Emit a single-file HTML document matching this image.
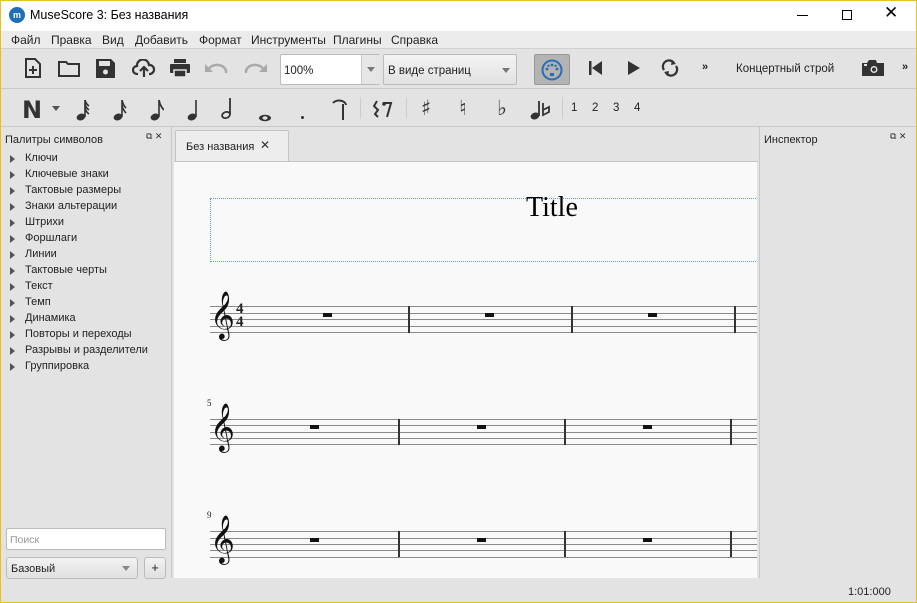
<!DOCTYPE html>
<html><head><meta charset="utf-8"><style>
*{box-sizing:border-box;margin:0;padding:0}
body{width:917px;height:603px;overflow:hidden;background:#e3e3e3;font-family:"Liberation Sans","DejaVu Sans",sans-serif;font-size:11px;color:#222;position:relative}
.abs{position:absolute}
#frame{position:absolute;left:0;top:0;width:917px;height:603px;border:1px solid #e6c01c;pointer-events:none;z-index:10}
#title{left:0;top:0;width:917px;height:31px;background:#fff}
#menu{left:0;top:31px;width:917px;height:17px;background:#ebebeb;font-size:12px}
#menu span{position:absolute;top:2px}
.tb{left:0;width:917px;background:#e3e3e3;border-bottom:1px solid #c8c8c8}
.pal{position:absolute;left:10px;font-size:11px}
.pal:before{content:"";position:absolute;left:0;top:3px;border-left:5px solid #555;border-top:4px solid transparent;border-bottom:4px solid transparent}
.pal span{margin-left:15px}
.sl{position:absolute;height:1px;background:#8a8a8a}
.bl{position:absolute;width:1.5px;background:#333}
.rest{position:absolute;width:9px;height:4px;background:#111}
.clef{position:absolute;font-family:"DejaVu Sans",serif;font-size:42px;line-height:1;color:#111}
.num{position:absolute;font-family:"Liberation Serif",serif;font-size:9px}
</style></head><body>
<div id="frame"></div>
<div class="abs" id="title">
 <div class="abs" style="left:9px;top:7px;width:16px;height:16px;border-radius:50%;background:#1e6fb8;color:#fff;font-size:9px;text-align:center;line-height:16px;font-weight:bold">m</div>
 <div class="abs" style="left:30px;top:8px;font-size:12.5px;color:#000">MuseScore 3: Без названия</div>
 <div class="abs" style="left:797px;top:15px;width:11px;height:1px;background:#000"></div>
 <div class="abs" style="left:842px;top:10px;width:10px;height:10px;border:1px solid #000"></div>
 <div class="abs" style="left:884px;top:3px;font-size:17px;color:#000">✕</div>
</div>
<div class="abs" id="menu">
 <span style="left:11px">Файл</span><span style="left:51px">Правка</span><span style="left:102px">Вид</span><span style="left:135px">Добавить</span><span style="left:199px">Формат</span><span style="left:251px">Инструменты</span><span style="left:333px">Плагины</span><span style="left:391px">Справка</span>
</div>
<div class="abs tb" style="top:48px;height:41px;border-top:1px solid #d0d0d0">
 <svg class="abs" style="left:24px;top:9px" width="17" height="21" viewBox="0 0 17 21"><path d="M2 1h9l5 5v13H2z" fill="none" stroke="#333" stroke-width="2"/><path d="M9 8v8M5 12h8" stroke="#333" stroke-width="2"/></svg>
 <svg class="abs" style="left:58px;top:11px" width="22" height="17"><path d="M1 2h7l2 2h11v12H1z" fill="none" stroke="#333" stroke-width="2"/></svg>
 <svg class="abs" style="left:96px;top:10px" width="19" height="19"><path d="M0 0h15l4 4v15H0z" fill="#333"/><rect x="3" y="2" width="11" height="5" fill="#e3e3e3"/><circle cx="9.5" cy="13" r="2.5" fill="#e3e3e3"/></svg>
 <svg class="abs" style="left:132px;top:10px" width="24" height="19"><path d="M6 15H5a4 4 0 0 1 0-8 6 6 0 0 1 12-1 4.5 4.5 0 0 1 1 9h-1" fill="none" stroke="#333" stroke-width="2.2"/><path d="M12 18V9M8 12l4-4 4 4" fill="none" stroke="#333" stroke-width="2.2"/></svg>
 <svg class="abs" style="left:170px;top:10px" width="20" height="18"><rect x="4" y="0" width="12" height="4" fill="#333"/><rect x="0" y="5" width="20" height="9" rx="1" fill="#333"/><rect x="4" y="11" width="12" height="7" fill="#333" stroke="#e3e3e3" stroke-width="1.5"/></svg>
 <svg class="abs" style="left:205px;top:13px" width="24" height="12"><path d="M3 9a9 7 0 0 1 18 2" fill="none" stroke="#aaa" stroke-width="2.5"/><path d="M0 2v8h8z" fill="#aaa"/></svg>
 <svg class="abs" style="left:243px;top:13px" width="24" height="12"><path d="M21 9a9 7 0 0 0-18 2" fill="none" stroke="#aaa" stroke-width="2.5"/><path d="M24 2v8h-8z" fill="#aaa"/></svg>
 <div class="abs" style="left:280px;top:5px;width:100px;height:31px;background:#fff;border:1px solid #bbb;border-radius:2px;padding:10px 0 0 3px;font-size:11.5px">100%</div>
 <div class="abs" style="left:361px;top:6px;width:19px;height:29px;background:#e6e6e6;border-left:1px solid #ccc"><div class="abs" style="left:5px;top:12px;border-top:5px solid #777;border-left:4px solid transparent;border-right:4px solid transparent"></div></div>
 <div class="abs" style="left:383px;top:5px;width:134px;height:31px;background:linear-gradient(#f3f3f3,#e2e2e2);border:1px solid #bbb;border-radius:2px;padding:10px 0 0 4px;font-size:11.5px">В виде страниц<div class="abs" style="left:118px;top:13px;border-top:5px solid #777;border-left:4px solid transparent;border-right:4px solid transparent"></div></div>
 <div class="abs" style="left:534px;top:5px;width:36px;height:31px;background:#b3b3b3;border:1px solid #999;border-radius:2px"></div>
 <svg class="abs" style="left:541px;top:10px" width="22" height="22"><circle cx="11" cy="11" r="9.5" fill="none" stroke="#2a6cb5" stroke-width="2"/><circle cx="6" cy="10" r="1.4" fill="#2a6cb5"/><circle cx="16" cy="10" r="1.4" fill="#2a6cb5"/><circle cx="11" cy="6" r="1.4" fill="#2a6cb5"/><circle cx="7.5" cy="6.8" r="1.2" fill="#2a6cb5"/><circle cx="14.5" cy="6.8" r="1.2" fill="#2a6cb5"/><rect x="9" y="14" width="4" height="3" fill="#2a6cb5"/></svg>
 <svg class="abs" style="left:589px;top:12px" width="14" height="14"><rect x="0" y="0" width="2.5" height="14" fill="#333"/><path d="M13 0v14L3 7z" fill="#333"/></svg>
 <svg class="abs" style="left:627px;top:12px" width="14" height="14"><path d="M1 0v14l12-7z" fill="#333"/></svg>
 <svg class="abs" style="left:660px;top:9px" width="20" height="20"><path d="M4 12a6 6 0 0 1 10-7M16 8a6 6 0 0 1-10 7" fill="none" stroke="#333" stroke-width="2.2"/><path d="M12 2l4 4-5 1zM8 18l-4-4 5-1z" fill="#333"/></svg>
 <div class="abs" style="left:702px;top:12px;font-size:11px;font-weight:bold">»</div>
 <div class="abs" style="left:736px;top:14px;font-size:11.5px">Концертный строй</div>
 <svg class="abs" style="left:862px;top:11px" width="22" height="16"><path d="M0 3h5l2-3h7l1 3h7v13H0z" fill="#333"/><circle cx="12" cy="9.5" r="3.5" fill="#e3e3e3"/><circle cx="12" cy="9.5" r="2" fill="#333"/><rect x="2" y="4" width="3" height="2" fill="#e3e3e3"/></svg>
 <div class="abs" style="left:902px;top:12px;font-size:11px;font-weight:bold">»</div>
</div>
<div class="abs tb" style="top:89px;height:38px">
 <div class="abs" style="left:22px;top:7px;font-size:24px;font-weight:bold;color:#333;font-family:'DejaVu Sans'">N</div>
 <div class="abs" style="left:52px;top:17px;border-top:5px solid #555;border-left:4px solid transparent;border-right:4px solid transparent"></div>
 <svg class="abs" style="left:76px;top:10px" width="14" height="22"><ellipse cx="5" cy="18" rx="4.5" ry="3.3" fill="#333" transform="rotate(-20 5 18)"/><path d="M9 18V1" stroke="#333" stroke-width="1.6"/><path d="M9 1q1 4 4 6M9 5q1 4 4 6M9 9q1 4 4 6" fill="none" stroke="#333" stroke-width="1.6"/></svg>
 <svg class="abs" style="left:113px;top:10px" width="14" height="22"><ellipse cx="5" cy="18" rx="4.5" ry="3.3" fill="#333" transform="rotate(-20 5 18)"/><path d="M9 18V1" stroke="#333" stroke-width="1.6"/><path d="M9 1q1 5 4 8M9 6q1 5 4 8" fill="none" stroke="#333" stroke-width="1.6"/></svg>
 <svg class="abs" style="left:150px;top:10px" width="14" height="22"><ellipse cx="5" cy="18" rx="4.5" ry="3.3" fill="#333" transform="rotate(-20 5 18)"/><path d="M9 18V1" stroke="#333" stroke-width="1.6"/><path d="M9 1q1 6 5 10" fill="none" stroke="#333" stroke-width="1.8"/></svg>
 <svg class="abs" style="left:187px;top:10px" width="14" height="22"><ellipse cx="5" cy="18" rx="4.5" ry="3.3" fill="#333" transform="rotate(-20 5 18)"/><path d="M9 18V1" stroke="#333" stroke-width="1.6"/></svg>
 <svg class="abs" style="left:221px;top:9px" width="12" height="22"><ellipse cx="5" cy="17" rx="4" ry="3" fill="none" stroke="#333" stroke-width="1.8" transform="rotate(-20 5 17)"/><path d="M9 16V0" stroke="#333" stroke-width="1.8"/></svg>
 <svg class="abs" style="left:258px;top:25px" width="14" height="8"><ellipse cx="7" cy="4" rx="6" ry="3.2" fill="#333"/><ellipse cx="7" cy="4" rx="2.5" ry="1.8" fill="#e3e3e3"/></svg>
 <div class="abs" style="left:301px;top:27px;width:3px;height:3px;border-radius:50%;background:#333"></div>
 <svg class="abs" style="left:331px;top:9px" width="16" height="22"><path d="M2 5a7 5 0 0 1 13 2" fill="none" stroke="#333" stroke-width="2"/><path d="M12 6v16" stroke="#333" stroke-width="2"/></svg>
 <svg class="abs" style="left:373px;top:11px" width="20" height="18"><path d="M4 1l-3 5 4 4-3 4 3 3" fill="none" stroke="#333" stroke-width="2"/><path d="M10 3h8l-4 14" fill="none" stroke="#333" stroke-width="2"/><circle cx="11" cy="4" r="1.8" fill="#333"/></svg>
 <div class="abs" style="left:421px;top:7px;font-size:21px;font-weight:bold;color:#333;font-family:'DejaVu Sans'">♯</div>
 <div class="abs" style="left:459px;top:7px;font-size:21px;font-weight:bold;color:#333;font-family:'DejaVu Sans'">♮</div>
 <div class="abs" style="left:497px;top:7px;font-size:21px;font-weight:bold;color:#333;font-family:'DejaVu Sans'">♭</div>
 <svg class="abs" style="left:530px;top:10px" width="22" height="22"><ellipse cx="5" cy="17" rx="4.5" ry="3.3" fill="#333" transform="rotate(-20 5 17)"/><path d="M9 17V2" stroke="#333" stroke-width="1.8"/><path d="M13 4v12l6-3v-5l-6 3" fill="none" stroke="#333" stroke-width="1.8"/></svg>
 <div class="abs" style="left:571px;top:13px;font-size:11.5px">1</div>
 <div class="abs" style="left:592px;top:13px;font-size:11.5px">2</div>
 <div class="abs" style="left:613px;top:13px;font-size:11.5px">3</div>
 <div class="abs" style="left:634px;top:13px;font-size:11.5px">4</div>
 <div class="abs" style="left:360px;top:8px;width:1px;height:22px;background:#ccc"></div>
 <div class="abs" style="left:406px;top:8px;width:1px;height:22px;background:#ccc"></div>
 <div class="abs" style="left:562px;top:8px;width:1px;height:22px;background:#ccc"></div>
</div>
<!-- left panel -->
<div class="abs" style="left:5px;top:134px;font-size:11px">Палитры символов</div>
<div class="abs" style="left:146px;top:131px;font-size:9px;color:#333">⧉ ✕</div>
<div class="pal" style="top:152px"><span>Ключи</span></div>
<div class="pal" style="top:168px"><span>Ключевые знаки</span></div>
<div class="pal" style="top:184px"><span>Тактовые размеры</span></div>
<div class="pal" style="top:200px"><span>Знаки альтерации</span></div>
<div class="pal" style="top:216px"><span>Штрихи</span></div>
<div class="pal" style="top:232px"><span>Форшлаги</span></div>
<div class="pal" style="top:248px"><span>Линии</span></div>
<div class="pal" style="top:264px"><span>Тактовые черты</span></div>
<div class="pal" style="top:280px"><span>Текст</span></div>
<div class="pal" style="top:296px"><span>Темп</span></div>
<div class="pal" style="top:312px"><span>Динамика</span></div>
<div class="pal" style="top:328px"><span>Повторы и переходы</span></div>
<div class="pal" style="top:344px"><span>Разрывы и разделители</span></div>
<div class="pal" style="top:360px"><span>Группировка</span></div>
<div class="abs" style="left:6px;top:528px;width:160px;height:22px;background:#fff;border:1px solid #bbb;border-radius:2px;padding:5px 3px;color:#999;font-size:10.5px">Поиск</div>
<div class="abs" style="left:6px;top:557px;width:132px;height:22px;background:linear-gradient(#f2f2f2,#e0e0e0);border:1px solid #bbb;border-radius:3px;padding:5px 4px;font-size:11px">Базовый<div class="abs" style="left:115px;top:8px;border-top:5px solid #888;border-left:4px solid transparent;border-right:4px solid transparent"></div></div>
<div class="abs" style="left:144px;top:557px;width:22px;height:22px;background:linear-gradient(#f2f2f2,#e0e0e0);border:1px solid #bbb;border-radius:3px;text-align:center;line-height:20px;font-size:13px">+</div>
<div class="abs" style="left:171px;top:127px;width:1px;height:451px;background:#c8c8c8"></div>
<!-- tab -->
<div class="abs" style="left:175px;top:130px;width:114px;height:32px;background:#ededed;border:1px solid #c4c4c4;border-bottom:none;border-radius:2px 2px 0 0"></div>
<div class="abs" style="left:186px;top:141px;font-size:11px">Без названия</div>
<div class="abs" style="left:260px;top:138px;font-size:12px;font-weight:bold;color:#333">✕</div>
<div class="abs" style="left:174px;top:161px;width:584px;height:1px;background:#c4c4c4"></div>
<!-- score -->
<div class="abs" style="left:174px;top:162px;width:583px;height:416px;background:#f9f9f9;overflow:hidden">
 <div class="abs" style="left:36px;top:36px;width:560px;height:64px;border:1px dotted #5aa0e0"></div>
 <div class="abs" style="left:352px;top:30px;font-family:'Liberation Serif',serif;font-size:28px;color:#000">Title</div>
</div>
<div class="abs" style="left:174px;top:162px;width:583px;height:416px;overflow:hidden">
 <!-- system 1 -->
 <div class="sl" style="left:36px;top:144px;width:560px"></div><div class="sl" style="left:36px;top:151px;width:560px"></div><div class="sl" style="left:36px;top:157px;width:560px"></div><div class="sl" style="left:36px;top:164px;width:560px"></div><div class="sl" style="left:36px;top:170px;width:560px"></div>
 <div class="clef" style="left:36px;top:132px">𝄞</div>
 <div class="abs" style="left:62px;top:141px;font-family:'Liberation Serif',serif;font-weight:bold;font-size:15px;line-height:13px">4<br>4</div>
 <div class="bl" style="left:234px;top:144px;height:27px"></div><div class="bl" style="left:397px;top:144px;height:27px"></div><div class="bl" style="left:560px;top:144px;height:27px"></div>
 <div class="rest" style="left:149px;top:151px"></div><div class="rest" style="left:311px;top:151px"></div><div class="rest" style="left:474px;top:151px"></div>
 <!-- system 2 -->
 <div class="num" style="left:33px;top:236px">5</div>
 <div class="sl" style="left:36px;top:257px;width:560px"></div><div class="sl" style="left:36px;top:263px;width:560px"></div><div class="sl" style="left:36px;top:270px;width:560px"></div><div class="sl" style="left:36px;top:276px;width:560px"></div><div class="sl" style="left:36px;top:282px;width:560px"></div>
 <div class="clef" style="left:36px;top:244px">𝄞</div>
 <div class="bl" style="left:224px;top:257px;height:26px"></div><div class="bl" style="left:390px;top:257px;height:26px"></div><div class="bl" style="left:556px;top:257px;height:26px"></div>
 <div class="rest" style="left:136px;top:263px"></div><div class="rest" style="left:303px;top:263px"></div><div class="rest" style="left:469px;top:263px"></div>
 <!-- system 3 -->
 <div class="num" style="left:33px;top:348px">9</div>
 <div class="sl" style="left:36px;top:369px;width:560px"></div><div class="sl" style="left:36px;top:376px;width:560px"></div><div class="sl" style="left:36px;top:382px;width:560px"></div><div class="sl" style="left:36px;top:388px;width:560px"></div><div class="sl" style="left:36px;top:395px;width:560px"></div>
 <div class="clef" style="left:36px;top:356px">𝄞</div>
 <div class="bl" style="left:224px;top:369px;height:26px"></div><div class="bl" style="left:390px;top:369px;height:26px"></div><div class="bl" style="left:556px;top:369px;height:26px"></div>
 <div class="rest" style="left:136px;top:376px"></div><div class="rest" style="left:303px;top:376px"></div><div class="rest" style="left:469px;top:376px"></div>
</div>
<!-- right panel -->
<div class="abs" style="left:759px;top:127px;width:1px;height:451px;background:#c8c8c8"></div>
<div class="abs" style="left:764px;top:134px;font-size:11px">Инспектор</div>
<div class="abs" style="left:890px;top:131px;font-size:9px;color:#333">⧉ ✕</div>
<div class="abs" style="left:848px;top:586px;font-size:11px;color:#222">1:01:000</div>
</body></html>
